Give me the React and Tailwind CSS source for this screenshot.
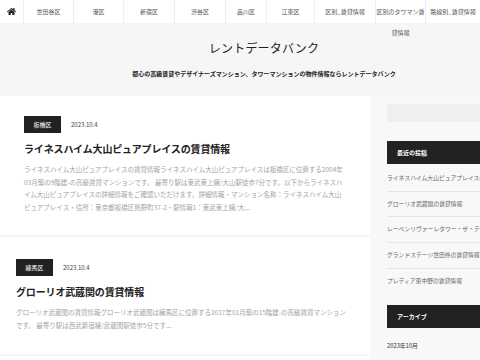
import React from "react";
import { FaHome } from "react-icons/fa";

const navItems = [
  { label: "世田谷区", w: "w-[50px]" },
  { label: "港区", w: "w-[50px]" },
  { label: "新宿区", w: "w-[51px]" },
  { label: "渋谷区", w: "w-[51px]" },
  { label: "品川区", w: "w-[41px]" },
  { label: "江東区", w: "w-[48px]" },
  { label: "区別_賃貸情報", w: "w-[61px]" },
  { label: ["区別のタワマン賃", "貸情報"], w: "w-[50px]" },
  { label: "路線別_賃貸情報", w: "w-[54px]" },
];

const recent = [
  "ライネスハイム大山ピュアプレイスの賃貸情報",
  "グローリオ武蔵関の賃貸情報",
  "レーベンリヴァーレタワー・ザ・テラスの賃貸情報",
  "グランドステージ世田谷の賃貸情報",
  "プレディア東中野の賃貸情報",
];

const Post = ({ area, date, title, lines, className }) => (
  <article className={"bg-white " + className}>
    <div className="flex items-center gap-[10px]">
      <span className="bg-[#222] text-white text-[6px] w-[37px] h-[17px] flex items-center justify-center">
        {area}
      </span>
      <span className="text-[6px] text-[#444]">{date}</span>
    </div>
    <h2 className="mt-[9px] text-[10px] leading-[14px] font-bold text-[#222] tracking-[-0.15px]">
      {title}
    </h2>
    <div className="mt-[7px] text-[6.5px] leading-[12.7px] text-[#a3a3a3]">
      {lines.map((l, i) => (
        <p key={i} className="whitespace-nowrap">
          {l}
        </p>
      ))}
    </div>
  </article>
);

const App = () => {
  return (
    <div
      className="w-[480px] h-[360px] overflow-hidden bg-[#f6f6f6]"
      style={{ fontFamily: '"Noto Sans CJK JP", "Noto Sans", sans-serif' }}
    >
      {/* top nav */}
      <nav className="flex h-[23px] bg-white relative z-10">
        <div className="w-[24px] flex items-center justify-center border-r border-[#eee]">
          <FaHome className="text-[#222] text-[9px]" />
        </div>
        {navItems.map((item, i) => (
          <div
            key={i}
            className={
              item.w +
              " shrink-0 text-center text-[6px] leading-[21px] pt-[1px] text-[#555] whitespace-nowrap border-r border-[#eee] last:border-r-0"
            }
          >
            {Array.isArray(item.label) ? (
              <>
                {item.label[0]}
                <br />
                {item.label[1]}
              </>
            ) : (
              item.label
            )}
          </div>
        ))}
      </nav>

      {/* site header */}
      <header className="text-center pt-[16px] pl-[48px] h-[73px]">
        <h1 className="text-[12px] leading-[18px] text-[#222] tracking-[0.2px]">
          レントデータバンク
        </h1>
        <p className="mt-[13px] text-[6px] font-bold text-[#222] leading-[8px]">
          都心の高級賃貸やデザイナーズマンション、タワーマンションの物件情報ならレントデータバンク
        </p>
      </header>

      <div className="flex">
        <main className="w-[370px] shrink-0 flex flex-col gap-[2px]">
          <Post
            className="pt-[20px] pb-[20px] pl-[24px] h-[139px]"
            area="板橋区"
            date="2023.10.4"
            title="ライネスハイム大山ピュアプレイスの賃貸情報"
            lines={[
              "ライネスハイム大山ピュアプレイスの賃貸情報ライネスハイム大山ピュアプレイスは板橋区に位置する2004年",
              "03月築の9階建-の高級賃貸マンションです。 最寄り駅は東武東上線/大山駅徒歩7分です。以下からライネスハ",
              "イム大山ピュアプレイスの詳細情報をご確認いただけます。詳細情報・マンション名称：ライネスハイム大山",
              "ピュアプレイス・住所：東京都板橋区熊野町37-2・駅情報1：東武東上線/大...",
            ]}
          />
          <Post
            className="pt-[22px] pb-[18px] pl-[16px] h-[117px]"
            area="練馬区"
            date="2023.10.4"
            title="グローリオ武蔵関の賃貸情報"
            lines={[
              "グローリオ武蔵関の賃貸情報グローリオ武蔵関は練馬区に位置する2017年01月築の15階建-の高級賃貸マンション",
              "です。 最寄り駅は西武新宿線/武蔵関駅徒歩5分です...",
            ]}
          />
          <div className="bg-white h-[20px]" />
        </main>

        <aside className="flex-1 pl-[17px] pt-[8px] bg-[#f8f8f8] overflow-hidden">
          <div className="h-[18px] bg-[#efefef]" />
          <div className="mt-[19px] h-[23px] bg-[#222] text-white text-[6px] font-bold flex items-center pl-[10px]">
            最近の投稿
          </div>
          <ul className="mt-[2px]">
            {recent.map((r, i) => (
              <li
                key={i}
                className="h-[25.7px] flex items-center text-[5.8px] text-[#666] whitespace-nowrap border-b border-[#e6e6e6] last:border-b-0"
              >
                {r}
              </li>
            ))}
          </ul>
          <div className="mt-[11px] h-[23px] bg-[#222] text-white text-[6px] font-bold flex items-center pl-[10px]">
            アーカイブ
          </div>
          <p className="mt-[14px] text-[5.8px] text-[#333]">2023年10月</p>
        </aside>
      </div>
    </div>
  );
};

export default App;
